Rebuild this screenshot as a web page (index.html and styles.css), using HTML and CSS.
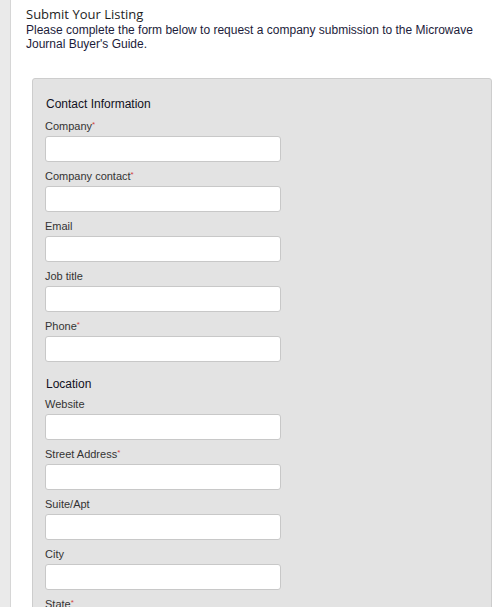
FILE: index.html
```html
<!DOCTYPE html>
<html lang="en">
<head>
<meta charset="utf-8">
<title>Submit Your Listing</title>
<link rel="stylesheet" href="styles.css">
</head>
<body>
<div class="page">
  <div class="side"></div>
  <main class="main">
    <h1 class="title">Submit Your Listing</h1>
    <p class="intro">Please complete the form below to request a company submission to the Microwave Journal Buyer's Guide.</p>
    <form class="panel">
      <h2 class="section section-first">Contact Information</h2>
      <div class="field"><label class="label">Company<span class="req">*</span></label><input class="input" type="text"></div>
      <div class="field"><label class="label">Company contact<span class="req">*</span></label><input class="input" type="text"></div>
      <div class="field"><label class="label">Email</label><input class="input" type="text"></div>
      <div class="field"><label class="label">Job title</label><input class="input" type="text"></div>
      <div class="field"><label class="label">Phone<span class="req">*</span></label><input class="input" type="text"></div>
      <h2 class="section">Location</h2>
      <div class="field"><label class="label">Website</label><input class="input" type="text"></div>
      <div class="field"><label class="label">Street Address<span class="req">*</span></label><input class="input" type="text"></div>
      <div class="field"><label class="label">Suite/Apt</label><input class="input" type="text"></div>
      <div class="field"><label class="label">City</label><input class="input" type="text"></div>
      <div class="field"><label class="label">State<span class="req">*</span></label><input class="input" type="text"></div>
      <div class="field"><label class="label">Zip</label><input class="input" type="text"></div>
    </form>
  </main>
</div>
</body>
</html>
```

FILE: styles.css
```css
html, body {
  margin: 0;
  padding: 0;
  background: #ffffff;
  font-family: "Liberation Sans", Arial, sans-serif;
  height: 100%;
  overflow: hidden;
}
.page {
  display: flex;
  min-height: 100%;
}
.side {
  width: 10px;
  flex: none;
  background: #eaeaea;
  border-right: 1px solid #d6d6d6;
}
.main {
  flex: 1;
  padding: 6px 9px 0 15px;
}
.title {
  margin: 0;
  font-family: "Open Sans", "Noto Sans", sans-serif;
  font-weight: 400;
  font-size: 13px;
  line-height: 17px;
  color: #1e1e1e;
}
.intro {
  margin: 0;
  font-size: 12px;
  line-height: 14px;
  color: #1c1c3a;
}
.panel {
  margin: 27px 0 0 6px;
  background: #e3e3e3;
  border: 1px solid #cdcdcd;
  border-radius: 3px;
  padding: 18px 12px 0 12px;
  min-height: 600px;
}
.section {
  margin: 15px 0 7px 1px;
  font-size: 12px;
  line-height: 14px;
  font-weight: 400;
  color: #111122;
}
.section-first {
  margin: 0 0 9px 1px;
}
.field {
  display: flex;
  flex-direction: column;
  align-items: flex-start;
  gap: 3px;
  margin-bottom: 8px;
}
.label {
  font-size: 11px;
  line-height: 13px;
  color: #333333;
}
.req {
  color: #d04040;
  font-size: 8px;
  vertical-align: top;
  line-height: 9px;
}
.input {
  box-sizing: border-box;
  width: 236px;
  height: 26px;
  margin: 0;
  background: #ffffff;
  border: 1px solid #c8c8c8;
  border-radius: 3px;
  padding: 0 6px;
}
```
